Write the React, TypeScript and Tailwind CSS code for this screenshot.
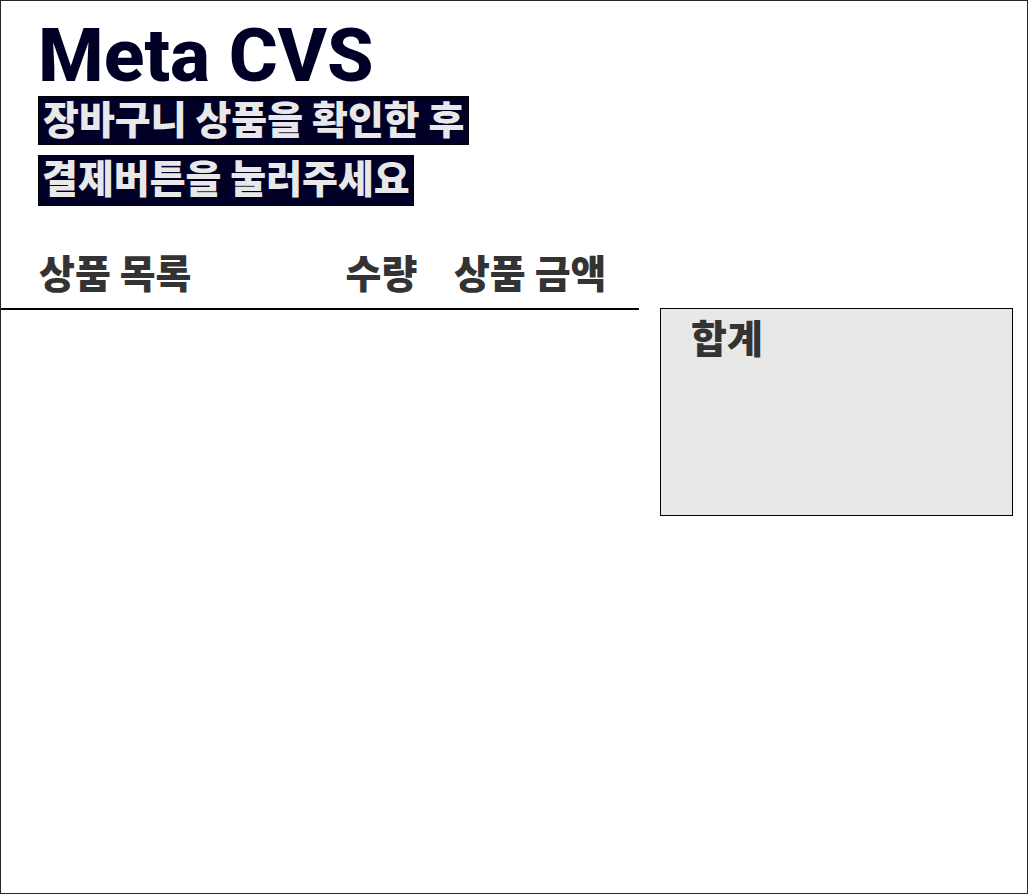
export default function App() {
  return (
    <div className="flex min-h-screen flex-col border border-[#262626] bg-white font-['Noto_Sans_CJK_KR',sans-serif] text-[#333333]">
      <header className="flex flex-col items-start pl-[37px] pt-[22px] font-black">
        <h1 className="font-['Roboto',sans-serif] text-[75px] font-extrabold leading-[64px] text-[#000026]">Meta CVS</h1>
        <p className="mt-[9px] border border-black bg-[#000026] px-1 pb-[7px] text-[39px] leading-10 text-[#e8e8e8]">장바구니 상품을 확인한 후</p>
        <p className="mt-[10px] border border-black bg-[#000026] px-[3px] pb-[9px] text-[39px] leading-10 text-[#e8e8e8]">결제버튼을 눌러주세요</p>
      </header>
      <main className="mt-10 grid grid-cols-[638fr_353fr] gap-x-[21px] pr-[14px]">
        <table className="w-full table-fixed self-start border-b-2 border-black text-[39px] leading-10">
          <thead>
            <tr className="text-left">
              <th className="w-[54%] whitespace-nowrap pb-[17px] pl-[38px] pt-[5px] font-black">상품 목록</th>
              <th className="w-[17%] whitespace-nowrap pb-[17px] pt-[5px] font-black">수량</th>
              <th className="whitespace-nowrap pb-[17px] pt-[5px] font-black">상품 금액</th>
            </tr>
          </thead>
        </table>
        <section className="mt-[62px] min-h-[208px] border border-black bg-[#e8e8e8] px-[30px] pt-[7px]">
          <h2 className="text-[39px] font-black leading-10">합계</h2>
        </section>
      </main>
    </div>
  );
}
